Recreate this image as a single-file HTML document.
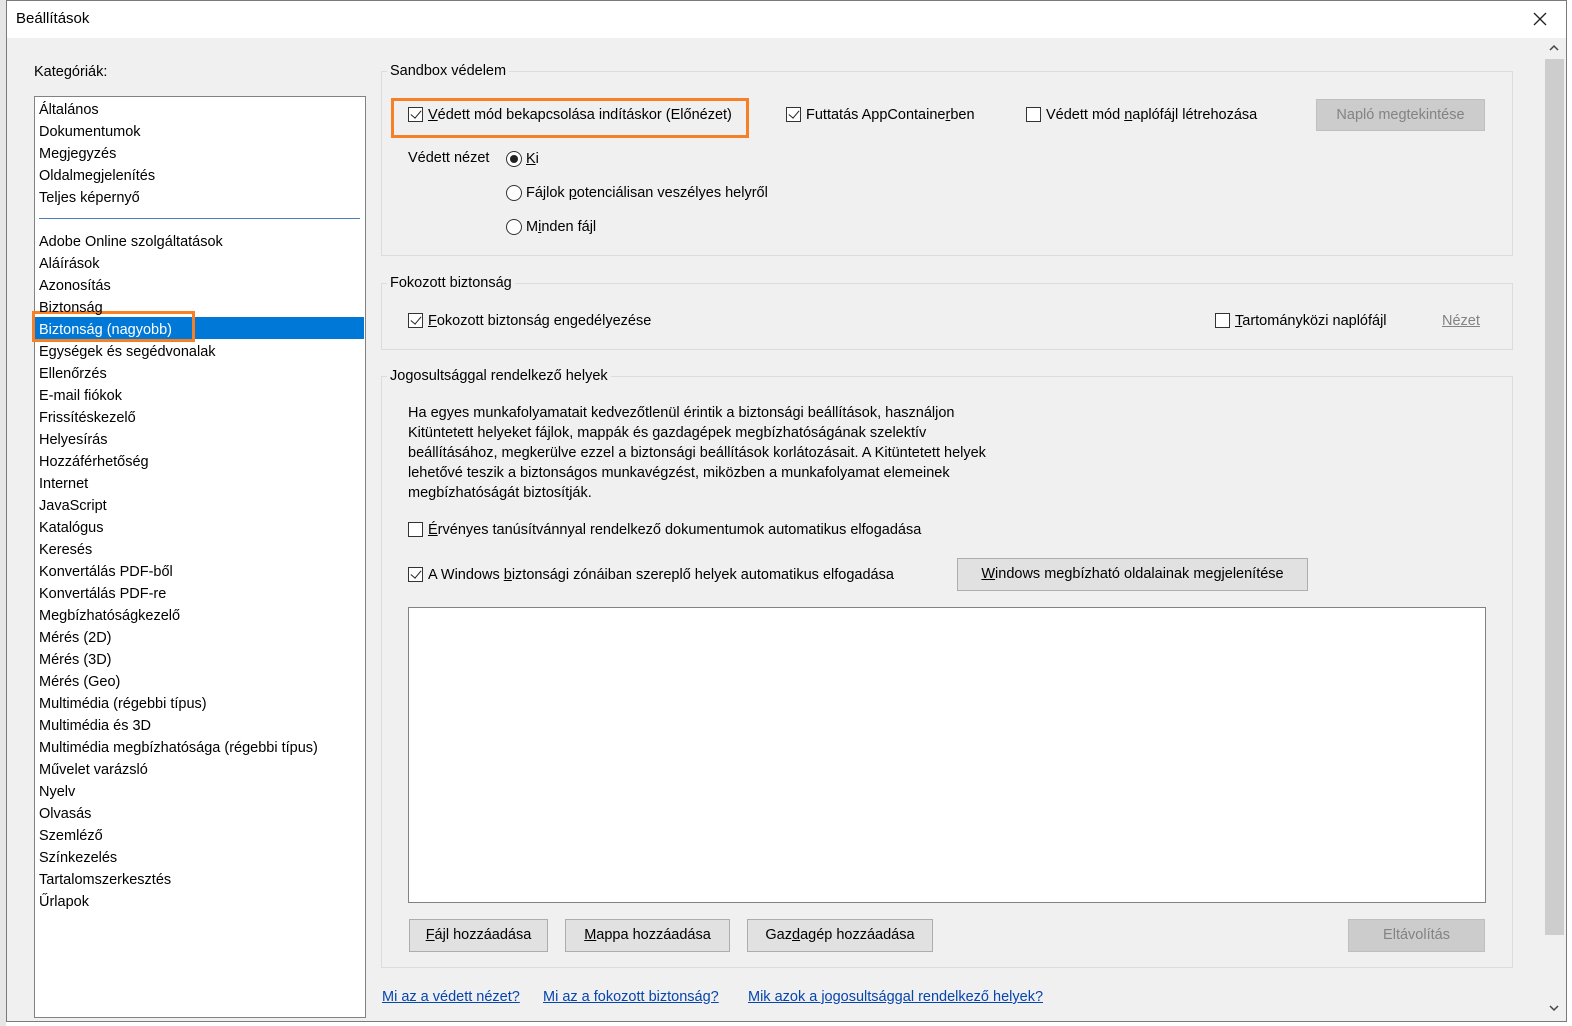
<!DOCTYPE html>
<html><head><meta charset="utf-8"><style>
*{margin:0;padding:0;box-sizing:border-box}
body{width:1572px;height:1026px;background:#fff;position:relative;overflow:hidden;font-family:"Liberation Sans",sans-serif;font-size:14.5px;color:#000}
.a{position:absolute}
.t{position:absolute;white-space:nowrap;line-height:20px;font-size:14.5px}
.cb{position:absolute;width:15px;height:15px;border:1px solid #333;background:#fff}
.cb.c::after{content:"";position:absolute;left:4px;top:0px;width:5px;height:9px;border:solid #222;border-width:0 1.5px 1.5px 0;transform:rotate(40deg)}
.rb{position:absolute;width:16px;height:16px;border:1px solid #333;border-radius:50%;background:#fff}
.rb.c::after{content:"";position:absolute;left:3px;top:3px;width:8px;height:8px;border-radius:50%;background:#222}
.grp{position:absolute;border:1px solid #dcdcdc}
.gl{position:absolute;background:#f0f0f0;padding:0 3px;line-height:20px;white-space:nowrap}
.btn{position:absolute;background:#e1e1e1;border:1px solid #adadad;text-align:center;line-height:30px;white-space:nowrap}
.dis{background:#cccccc;border-color:#bfbfbf;color:#838383}
u{text-decoration:underline}
.lk{color:#0645ad;text-decoration:underline}
</style></head><body>
<div class="a" style="left:0;top:0;width:6px;height:1026px;background:#e6e6e6"></div>
<div class="a" style="left:6px;top:0;width:1561px;height:1022px;border:1px solid #7a7a7a;background:#f0f0f0"></div>
<div class="a" style="left:7px;top:1px;width:1559px;height:37px;background:#fff"></div>
<div class="t" style="left:16px;top:9px;font-size:15px">Beállítások</div>
<svg class="a" style="left:1533px;top:12px" width="14" height="14"><path d="M1 1L13 13M13 1L1 13" stroke="#222" stroke-width="1.3"/></svg>
<div class="a" style="left:1545px;top:38px;width:19px;height:980px;background:#f0f0f0"></div>
<div class="a" style="left:1545px;top:59px;width:19px;height:876px;background:#cdcdcd"></div>
<svg class="a" style="left:1549px;top:44px" width="10" height="8"><path d="M1 6L5 2L9 6" stroke="#444" stroke-width="1.5" fill="none"/></svg>
<svg class="a" style="left:1549px;top:1004px" width="10" height="8"><path d="M1 2L5 6L9 2" stroke="#444" stroke-width="1.5" fill="none"/></svg>

<div class="t" style="left:34px;top:62px">Kate<u>g</u>óriák:</div>
<div class="a" style="left:34px;top:96px;width:332px;height:922px;background:#fff;border:1px solid #828282"></div>
<div class="a" style="left:39px;top:218px;width:321px;height:1px;background:#4a7fb5"></div>
<div class="a" style="left:35px;top:317px;width:329px;height:22px;background:#0078d7"></div>
<div class="a" style="left:32px;top:311px;width:163px;height:31px;border:3px solid #f58025"></div>
<div class="t" style="left:39px;top:99px;line-height:22px">Általános<br>Dokumentumok<br>Megjegyzés<br>Oldalmegjelenítés<br>Teljes képernyő</div>
<div class="t" style="left:39px;top:231px;line-height:22px">Adobe Online szolgáltatások<br>Aláírások<br>Azonosítás<br>Biztonság<br><span style="color:#fff">Biztonság (nagyobb)</span><br>Egységek és segédvonalak<br>Ellenőrzés<br>E-mail fiókok<br>Frissítéskezelő<br>Helyesírás<br>Hozzáférhetőség<br>Internet<br>JavaScript<br>Katalógus<br>Keresés<br>Konvertálás PDF-ből<br>Konvertálás PDF-re<br>Megbízhatóságkezelő<br>Mérés (2D)<br>Mérés (3D)<br>Mérés (Geo)<br>Multimédia (régebbi típus)<br>Multimédia és 3D<br>Multimédia megbízhatósága (régebbi típus)<br>Művelet varázsló<br>Nyelv<br>Olvasás<br>Szemléző<br>Színkezelés<br>Tartalomszerkesztés<br>Űrlapok</div>

<div class="grp" style="left:381px;top:71px;width:1132px;height:185px"></div>
<div class="gl" style="left:387px;top:61px">Sandbox védelem</div>
<div class="a" style="left:391px;top:98px;width:358px;height:40px;border:3px solid #f58025"></div>
<div class="cb c" style="left:408px;top:107px"></div>
<div class="t" style="left:428px;top:105px"><u>V</u>édett mód bekapcsolása indításkor (Előnézet)</div>
<div class="cb c" style="left:786px;top:107px"></div>
<div class="t" style="left:806px;top:105px">Futtatás AppContaine<u>r</u>ben</div>
<div class="cb" style="left:1026px;top:107px"></div>
<div class="t" style="left:1046px;top:105px">Védett mód <u>n</u>aplófájl létrehozása</div>
<div class="btn dis" style="left:1316px;top:99px;width:169px;height:32px">Napló megtekintése</div>
<div class="t" style="left:408px;top:148px">Védett nézet</div>
<div class="rb c" style="left:506px;top:151px"></div>
<div class="t" style="left:526px;top:149px"><u>K</u>i</div>
<div class="rb" style="left:506px;top:185px"></div>
<div class="t" style="left:526px;top:183px">Fájlok <u>p</u>otenciálisan veszélyes helyről</div>
<div class="rb" style="left:506px;top:219px"></div>
<div class="t" style="left:526px;top:217px">M<u>i</u>nden fájl</div>

<div class="grp" style="left:381px;top:283px;width:1132px;height:67px"></div>
<div class="gl" style="left:387px;top:273px">Fokozott biztonság</div>
<div class="cb c" style="left:408px;top:313px"></div>
<div class="t" style="left:428px;top:311px"><u>F</u>okozott biztonság engedélyezése</div>
<div class="cb" style="left:1215px;top:313px"></div>
<div class="t" style="left:1235px;top:311px"><u>T</u>artományközi naplófájl</div>
<div class="t" style="left:1442px;top:311px;color:#838383;text-decoration:underline">Nézet</div>

<div class="grp" style="left:381px;top:376px;width:1132px;height:592px"></div>
<div class="gl" style="left:387px;top:366px">Jogosultsággal rendelkező helyek</div>
<div class="t" style="left:408px;top:403px">Ha egyes munkafolyamatait kedvezőtlenül érintik a biztonsági beállítások, használjon<br>Kitüntetett helyeket fájlok, mappák és gazdagépek megbízhatóságának szelektív<br>beállításához, megkerülve ezzel a biztonsági beállítások korlátozásait. A Kitüntetett helyek<br>lehetővé teszik a biztonságos munkavégzést, miközben a munkafolyamat elemeinek<br>megbízhatóságát biztosítják.</div>
<div class="cb" style="left:408px;top:522px"></div>
<div class="t" style="left:428px;top:520px"><u>É</u>rvényes tanúsítvánnyal rendelkező dokumentumok automatikus elfogadása</div>
<div class="cb c" style="left:408px;top:567px"></div>
<div class="t" style="left:428px;top:565px">A Windows <u>b</u>iztonsági zónáiban szereplő helyek automatikus elfogadása</div>
<div class="btn" style="left:957px;top:558px;width:351px;height:33px"><u>W</u>indows megbízható oldalainak megjelenítése</div>
<div class="a" style="left:408px;top:607px;width:1078px;height:296px;background:#fff;border:1px solid #828282"></div>
<div class="btn" style="left:409px;top:919px;width:139px;height:33px"><u>F</u>ájl hozzáadása</div>
<div class="btn" style="left:565px;top:919px;width:165px;height:33px"><u>M</u>appa hozzáadása</div>
<div class="btn" style="left:747px;top:919px;width:186px;height:33px">Gaz<u>d</u>agép hozzáadása</div>
<div class="btn dis" style="left:1348px;top:919px;width:137px;height:33px">Eltávolítás</div>

<div class="t lk" style="left:382px;top:987px">Mi az a védett nézet?</div>
<div class="t lk" style="left:543px;top:987px">Mi az a fokozott biztonság?</div>
<div class="t lk" style="left:748px;top:987px">Mik azok a jogosultsággal rendelkező helyek?</div>
</body></html>
